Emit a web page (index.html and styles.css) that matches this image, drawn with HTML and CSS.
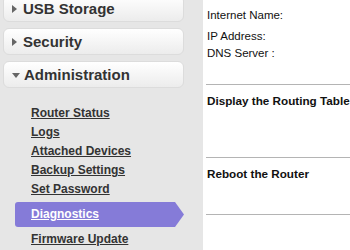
FILE: index.html
```html
<!DOCTYPE html>
<html lang="en">
<head>
    <meta charset="UTF-8">
    <title>Diagnostics</title>
    <link rel="stylesheet" href="styles.css">
</head>
<body>
    <div class="page">
        <div class="sidebar">
            <div class="menu-card first"><span class="arrow"></span>USB Storage</div>
            <div class="menu-card"><span class="arrow"></span>Security</div>
            <div class="menu-card"><span class="arrow open"></span>Administration</div>
            <ul class="submenu">
                <li><a href="#">Router Status</a></li>
                <li><a href="#">Logs</a></li>
                <li><a href="#">Attached Devices</a></li>
                <li><a href="#">Backup Settings</a></li>
                <li><a href="#">Set Password</a></li>
                <li class="active"><a href="#">Diagnostics</a></li>
                <li><a href="#">Firmware Update</a></li>
            </ul>
        </div>
        <div class="content">
            <p class="row first-row">Internet Name:</p>
            <p class="row">IP Address:</p>
            <p class="row dns">DNS Server :</p>
            <div class="section routing">
                <p class="heading">Display the Routing Table</p>
            </div>
            <div class="section reboot">
                <p class="heading">Reboot the Router</p>
            </div>
        </div>
    </div>
</body>
</html>
```

FILE: styles.css
```css
body {
    margin: 0;
    padding: 0;
    font-family: "Liberation Sans", Arial, sans-serif;
    background-color: #e6e6e6;
    color: #111111;
    overflow: hidden;
}
.page {
    display: flex;
    height: 250px;
}
.sidebar {
    width: 203px;
    flex-shrink: 0;
    display: flex;
    flex-direction: column;
    gap: 6px;
}
.menu-card {
    box-sizing: border-box;
    width: 181px;
    height: 27px;
    margin-left: 3px;
    padding-left: 8px;
    border: 1px solid #dcdcdc;
    border-radius: 6px;
    background: linear-gradient(#ffffff, #ececec);
    display: flex;
    align-items: center;
    font-size: 15px;
    font-weight: bold;
    color: #333333;
    line-height: 25px;
}
.menu-card.first {
    margin-top: -5px;
}
.arrow {
    width: 0;
    height: 0;
    border-left: 5px solid #666666;
    border-top: 4px solid transparent;
    border-bottom: 4px solid transparent;
    margin-right: 6px;
}
.arrow.open {
    border-left: 4px solid transparent;
    border-right: 4px solid transparent;
    border-top: 5px solid #666666;
    border-bottom: 0;
    margin-right: 4px;
    margin-top: 2px;
}
.submenu {
    list-style: none;
    margin: 10px 0 0 15px;
    padding: 0;
    width: 169px;
}
.submenu li {
    height: 19px;
    line-height: 19px;
    padding-left: 16px;
    font-size: 12px;
    font-weight: bold;
}
.submenu a {
    color: #333333;
    text-decoration: underline;
}
.submenu li.active {
    height: 25px;
    line-height: 25px;
    margin: 3px 0 3px;
    background-color: #857bd8;
    border-radius: 3px 0 0 3px;
    clip-path: polygon(0 0, calc(100% - 9px) 0, 100% 50%, calc(100% - 9px) 100%, 0 100%);
}
.submenu li.active a {
    color: #ffffff;
}
.content {
    flex: 1;
    background-color: #ffffff;
    padding: 8px 0 0 4px;
    min-width: 0;
}
.row {
    margin: 0;
    font-size: 11.5px;
    line-height: 14px;
}
.first-row {
    margin-bottom: 7px;
}
.dns {
    margin-top: 3px;
}
.section {
    border-top: 1px solid #b4b4b4;
    margin-left: -1px;
}
.routing {
    margin-top: 24px;
    height: 72px;
}
.reboot {
    height: 56px;
    border-bottom: 1px solid #b4b4b4;
}
.heading {
    margin: 9px 0 0 1px;
    font-size: 11.7px;
    font-weight: bold;
    line-height: 14px;
    white-space: nowrap;
}
```
